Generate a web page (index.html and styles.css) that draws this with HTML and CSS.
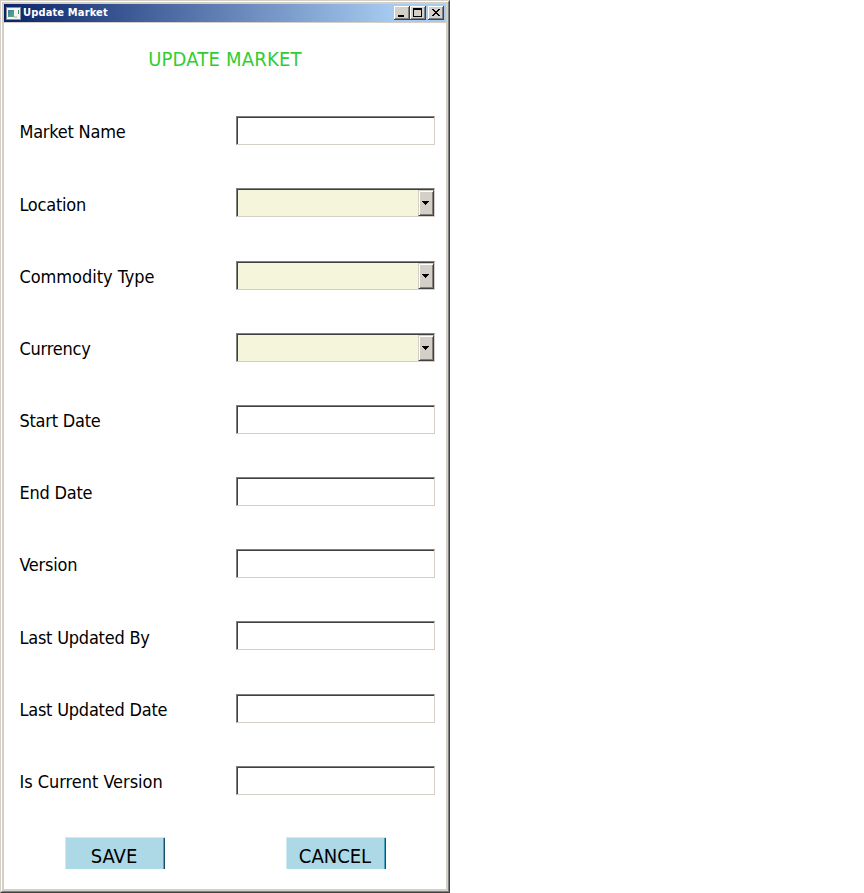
FILE: index.html
```html
<!DOCTYPE html>
<html lang="en">
<head>
<meta charset="utf-8">
<title>Update Market</title>
<link rel="stylesheet" href="styles.css">
</head>
<body>
<div class="window">
<div class="frame">
  <header class="titlebar">
    <svg class="app-icon" width="15" height="13" viewBox="0 0 15 13" shape-rendering="crispEdges">
      <defs><linearGradient id="g" x2="1" y2="1"><stop stop-color="#3c7cac"/><stop offset="1" stop-color="#58b078"/></linearGradient></defs>
      <path fill="#8c8c88" d="M0 0h15v13H0z"/><path fill="#f4f4f4" d="M1 1h13v11H1z"/>
      <path fill="url(#g)" d="M2 3h6v7H2z"/><path fill="#d0d0d0" d="M8 9h3v2H8z"/><path fill="#389878" d="M12 3h1v4h-1z"/>
    </svg>
    <span class="caption">Update Market</span>
    <div class="controls">
      <button class="control" aria-label="Minimize"><svg width="16" height="14" shape-rendering="crispEdges"><path d="M4 9h6v2H4z"/></svg></button>
      <button class="control" aria-label="Maximize"><svg width="16" height="14" shape-rendering="crispEdges"><path fill-rule="evenodd" d="M3 2h9v9H3zM4 4v6h7V4z"/></svg></button>
      <button class="control close" aria-label="Close"><svg width="16" height="14" shape-rendering="crispEdges"><path d="M4 3h2v1h1v1h2V4h1V3h2v1h-1v1h-1v1H9v1h1v1h1v1h1v1h-2V9H9V8H7v1H6v1H4V9h1V8h1V7h1V6H6V5H5V4H4z"/></svg></button>
    </div>
  </header>
  <main class="content">
    <h1 class="heading">UPDATE MARKET</h1>
    <form class="form">
      <div class="row"><label class="label">Market Name</label><div class="field"></div></div>
      <div class="row"><label class="label">Location</label><div class="field select"><span class="arrow"><svg width="7" height="4" shape-rendering="crispEdges"><path d="M0 0h7v1H6v1H5v1H4v1H3V3H2V2H1V1H0z"/></svg></span></div></div>
      <div class="row"><label class="label loose">Commodity Type</label><div class="field select"><span class="arrow"><svg width="7" height="4" shape-rendering="crispEdges"><path d="M0 0h7v1H6v1H5v1H4v1H3V3H2V2H1V1H0z"/></svg></span></div></div>
      <div class="row"><label class="label">Currency</label><div class="field select"><span class="arrow"><svg width="7" height="4" shape-rendering="crispEdges"><path d="M0 0h7v1H6v1H5v1H4v1H3V3H2V2H1V1H0z"/></svg></span></div></div>
      <div class="row"><label class="label">Start Date</label><div class="field"></div></div>
      <div class="row"><label class="label">End Date</label><div class="field"></div></div>
      <div class="row"><label class="label">Version</label><div class="field"></div></div>
      <div class="row"><label class="label">Last Updated By</label><div class="field"></div></div>
      <div class="row"><label class="label">Last Updated Date</label><div class="field"></div></div>
      <div class="row"><label class="label loose">Is Current Version</label><div class="field"></div></div>
    </form>
    <div class="actions">
      <button class="action">SAVE</button>
      <button class="action cancel">CANCEL</button>
    </div>
  </main>
</div>
</div>
</body>
</html>
```
FILE: styles.css
```css
* { box-sizing: border-box; }
body { margin: 0; background: #fff; font-family: "DejaVu Sans Condensed", "DejaVu Sans", sans-serif; font-stretch: condensed; color: #000; }
button { font: inherit; color: inherit; border-radius: 0; padding: 0; }
svg { display: block; }
.window { width: 450px; height: 893px; border: 1px solid; border-color: #d4d0c8 #404040 #404040 #d4d0c8; }
.frame { height: 100%; border: 1px solid; border-color: #fff #808080 #808080 #fff; box-shadow: inset 0 0 0 2px #d4d0c8; padding: 2px; }
.titlebar { display: flex; align-items: center; height: 19px; padding: 0 2px; border-bottom: 1px solid #d4d0c8; background: linear-gradient(90deg, #0a246a, #a6caf0 88%); }
.caption { margin-left: 2px; color: #fff; font-size: 11px; font-weight: bold; line-height: 18px; white-space: nowrap; letter-spacing: .15px; }
.controls { display: flex; margin-left: auto; }
.control { width: 16px; height: 14px; border: 0; background: #d4d0c8; box-shadow: inset -1px -1px #404040, inset 1px 1px #fff, inset -2px -2px #808080; }
.close { margin-left: 2px; }
.content { height: 866px; display: flex; flex-direction: column; background: #fff; }
.heading { margin: 24px 0 0; width: 442px; height: 24px; line-height: 24px; text-align: center; font-size: 20px; font-weight: normal; color: #32cd32; letter-spacing: .22px; }
.form { margin-top: 45.2px; }
.row { display: flex; height: 72.18px; padding-left: 15.4px; }
.label { width: 216.6px; height: 29px; margin-top: .2px; line-height: 31px; font-size: 18px; white-space: nowrap; letter-spacing: -.22px; }
.loose { letter-spacing: -.02px; }
.field { width: 199px; height: 29px; border: 1px solid; border-color: #808080 #d4d0c8 #d4d0c8 #808080; box-shadow: inset 1px 1px #404040; }
.select { display: flex; justify-content: flex-end; background: #f5f5dc; padding: 1px 0 0; }
.arrow { width: 16px; height: 26px; display: flex; align-items: center; justify-content: center; padding-right: 1px; background: #d4d0c8; border: 1px solid; border-color: #d4d0c8 #404040 #404040 #d4d0c8; box-shadow: inset 1px 1px #fff, inset -1px -1px #808080; }
.actions { display: flex; gap: 121px; margin: -1px 0 0 61px; }
.action { width: 100px; height: 32px; border: 0; background: #add8e6; box-shadow: inset 1px 1px #d1eaf2, inset -1px 0 #16506a, inset -2px 0 #48a4c0; font-size: 20px; line-height: 24px; padding: 6px 2px 0 0; letter-spacing: 0; overflow: hidden; }
```
